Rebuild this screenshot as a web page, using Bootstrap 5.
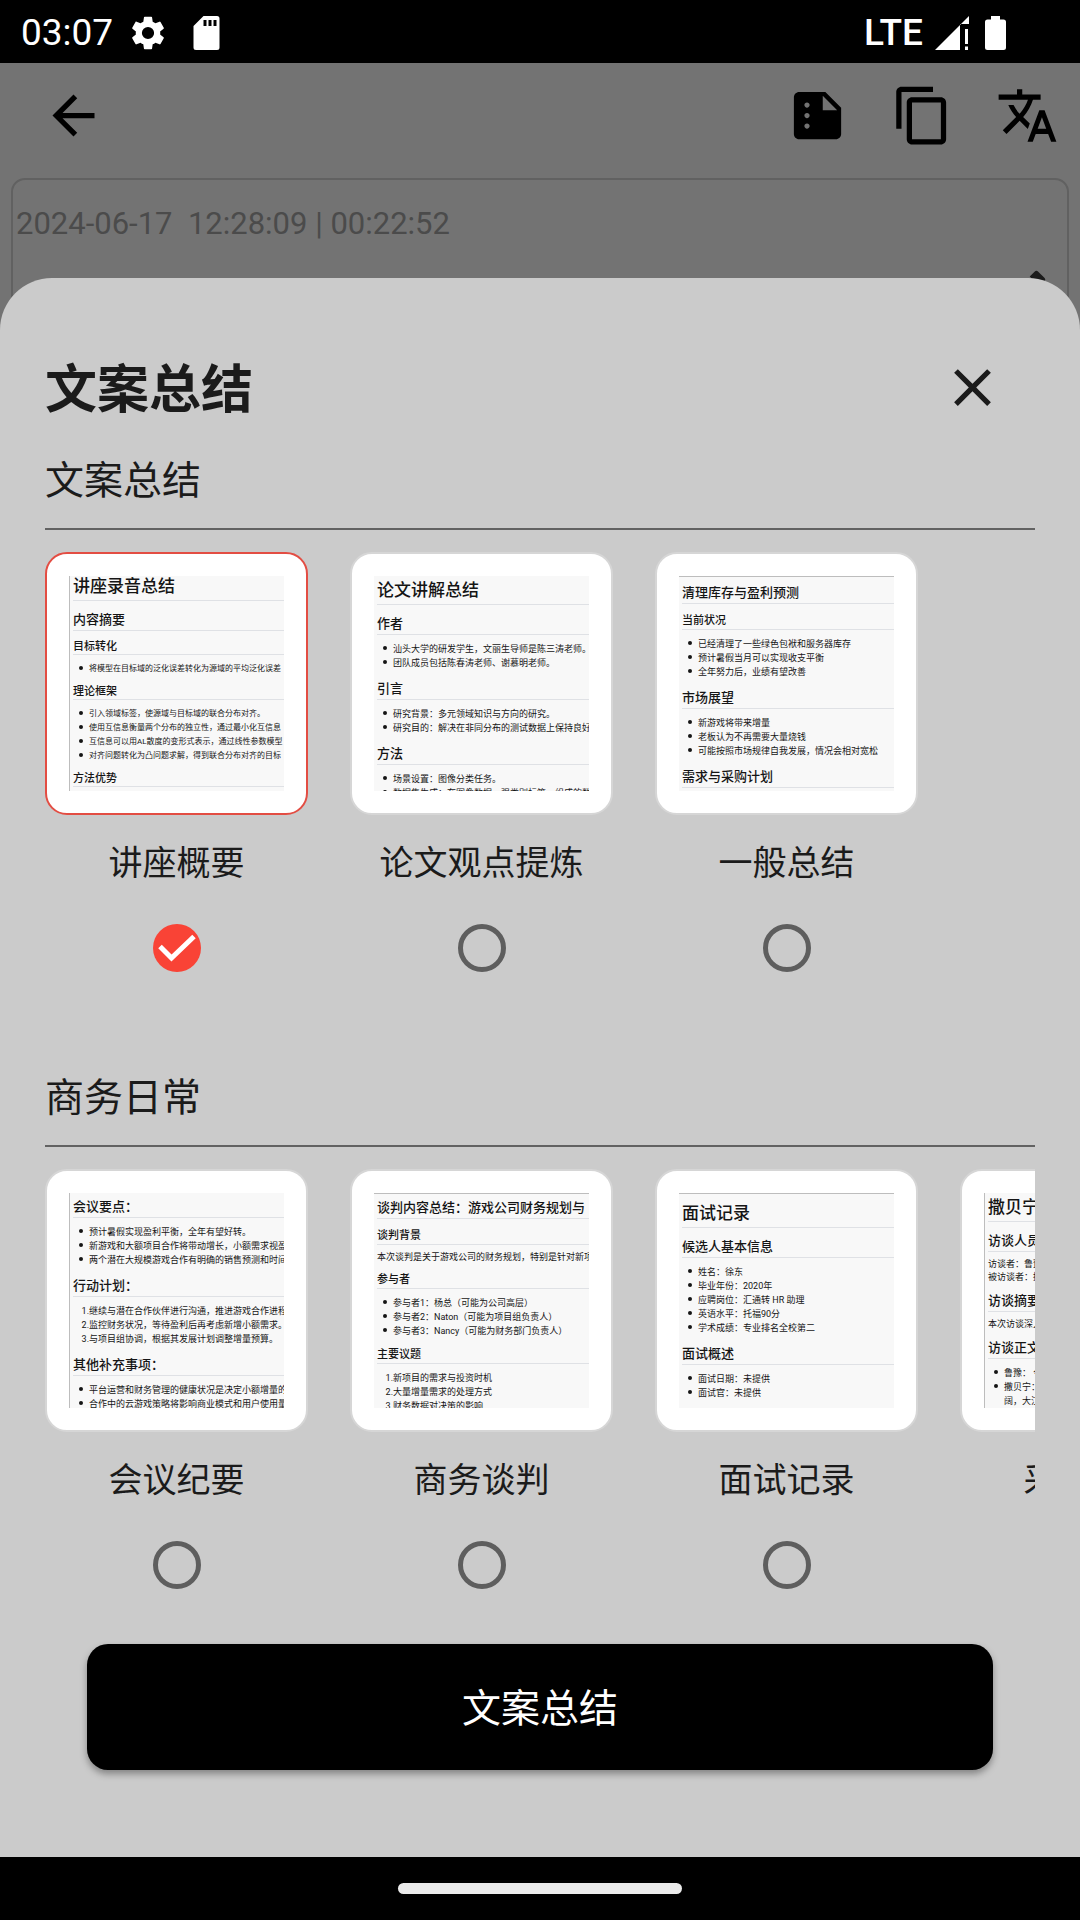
<!DOCTYPE html>
<html lang="zh-CN">
<head>
<meta charset="utf-8">
<meta name="viewport" content="width=device-width, initial-scale=1">
<title>文案总结</title>
<link href="https://cdn.jsdelivr.net/npm/bootstrap@5.3.0/dist/css/bootstrap.min.css" rel="stylesheet">
<style>
  body { font-family: Roboto, "Noto Sans CJK SC", sans-serif; background: #000; color: #1b1b1b; }
  .ico { width: 63px; height: 63px; fill: currentColor; display: block; }

  /* system bars */
  .status-bar { height: 63px; padding: 2px 74px 0 21px; font-size: 37px; color: #fff; }
  .status-bar svg { fill: #fff; height: 34px; display: block; }
  .status-left, .status-icons { gap: 18px; }
  .status-icons { gap: 28px; }
  .status-right { gap: 12px; }
  .network-type { font-size: 37px; font-weight: 500; }
  .home-bar { height: 63px; }
  .home-pill { width: 284px; height: 11px; border-radius: 6px; background: #ebebeb; }

  /* dimmed page behind the sheet */
  .dimmed { background: #737373; color: #000; }
  .tool-row { padding: 21px 21px 31px 42px; }
  .tool-gap { gap: 42px; }
  .tool-btn { color: #000; background: none; border: 0; padding: 0; }
  .record-card { margin: 0 11px; border: 2px solid #616161; border-radius: 14px; }
  .record-meta { padding: 22px 0 0 3px; font-size: 31px; line-height: 44px; color: #4b4b4b; white-space: pre; }
  .record-title { padding: 17px 14px 0 46px; font-size: 39px; line-height: 72px; color: #1b1b1b; }

  /* sheet */
  .sheet { margin-top: 215px; padding: 78px 45px 0; background: #cbcbcb; border-radius: 52px 52px 0 0; }
  .sheet-title { font-size: 52px; line-height: 69px; font-weight: 700; }
  .close-btn { margin-right: 31px; color: #1b1b1b; }
  .group-title { margin: 0; padding: 26px 0 17px; font-size: 39px; line-height: 60px; font-weight: 400; border-bottom: 2px solid #626262; }
  .group-next { margin-top: 70px; }
  .choices { gap: 42px; padding-top: 22px; overflow: hidden; }
  .choice { flex: 0 0 263px; cursor: pointer; }
  .choice-name { margin: 23px 0 36px; font-size: 34px; line-height: 50px; white-space: nowrap; }
  .choice .form-check-input { width: 48px; height: 48px; margin: 0; border: 5px solid #5e5e5e; background-color: transparent; }
  .choice .form-check-input:checked { border: 0; background-color: #f94336; background-size: 100% 100%;
    background-image: url("data:image/svg+xml,%3csvg xmlns='http://www.w3.org/2000/svg' viewBox='0 0 48 48'%3e%3cpath fill='none' stroke='%23fff' stroke-width='5' d='M7 22.500L18.500 34L41 12.500'/%3e%3c/svg%3e"); }
  .thumb { width: 263px; height: 263px; padding: 22px; border: 2px solid #d6d6d6; border-radius: 22px; background: #fff; }
  .thumb.chosen { border-color: #e34d43; }

  /* document previews */
  .doc { height: 215px; overflow: hidden; padding-left: 3px; background: #f8f8f8; font-size: 9px; line-height: 14px; white-space: nowrap; color: #151515; }
  .doc.edge-left { border-left: 1px solid #bdbdbd; }
  .doc.edge-top { border-top: 1px solid #bdbdbd; }
  .doc h3, .doc h4, .doc h5 { margin: 12px 0 0; border-bottom: 1px solid #dfe1e5; font-weight: 500; }
  .doc h3 { font-size: 17px; line-height: 20px; padding-bottom: 4px; }
  .doc h4 { font-size: 13px; line-height: 13px; padding-bottom: 4px; }
  .doc h5 { font-size: 11px; line-height: 11px; padding-bottom: 3px; margin-top: 11px; }
  .doc > :first-child { margin-top: 0; }
  .doc p { margin: 6px 0 0; line-height: 13px; }
  .doc p + h4, .doc p + h5 { margin-top: 10px; }
  .doc ul, .doc ol { margin: 7px 0 0; padding: 0; list-style: none; counter-reset: step; }
  .doc li { display: flex; }
  .doc ul > li::before { content: ""; flex: none; width: 4px; height: 4px; margin: 4px 6px 0; border-radius: 50%; background: #151515; }
  .doc ol > li::before { counter-increment: step; content: counter(step) "."; flex: none; width: 16px; text-align: right; }
  .doc-compact { font-size: 8px; }
  .doc-compact h5 { padding-bottom: 2px; margin-top: 10px; }
  .top-4 { padding-top: 4px; }
  .top-7 { padding-top: 7px; }
  .top-9 { padding-top: 9px; }

  .submit-btn { display: block; width: calc(100% - 84px); height: 126px; margin: 55px 42px 87px; padding: 10px 12px 6px; border-radius: 21px; background: #000; color: #fff; font-size: 39px; box-shadow: 0 4px 7px rgba(0, 0, 0, .35); }
  .submit-btn:hover { background: #000; color: #fff; }
</style>
<script src="https://cdn.jsdelivr.net/npm/bootstrap@5.3.0/dist/js/bootstrap.bundle.min.js"></script>
</head>
<body class="min-vh-100 d-flex flex-column">

<header class="status-bar d-flex align-items-center justify-content-between">
  <div class="status-left d-flex align-items-center">
    <span>03:07</span>
    <div class="status-icons d-flex">
      <svg width="34" viewBox="2 2 20 20"><path d="M19.140 12.940c.040-.300.060-.610.060-.940 0-.320-.020-.640-.070-.940l2.030-1.580a.490.490 0 0 0 .120-.610l-1.920-3.320a.488.488 0 0 0-.590-.220l-2.390.960c-.500-.380-1.030-.700-1.620-.940l-.360-2.540a.484.484 0 0 0-.480-.410h-3.840c-.240 0-.430.170-.470.410l-.360 2.540c-.590.240-1.130.570-1.620.940l-2.390-.960c-.220-.080-.470 0-.590.220L2.740 8.870c-.120.210-.080.470.120.610l2.030 1.580c-.050.300-.090.630-.090.940s.020.640.070.940l-2.030 1.580a.490.490 0 0 0-.120.610l1.920 3.320c.120.220.370.290.590.220l2.390-.960c.500.380 1.030.700 1.620.940l.360 2.540c.050.240.240.410.480.410h3.840c.240 0 .440-.170.470-.410l.360-2.540c.590-.240 1.130-.560 1.620-.940l2.390.960c.220.080.470 0 .590-.220l1.920-3.320c.120-.220.070-.470-.120-.610l-2.010-1.580zM12 15.600A3.600 3.600 0 1 1 12 8.400a3.600 3.600 0 0 1 0 7.200z"/></svg>
      <svg width="27" viewBox="0 0 26 34"><path fill-rule="evenodd" d="M10 0H23.500Q26 0 26 2.500V31.500Q26 34 23.500 34H2.500Q0 34 0 31.500V10ZM10 4v6h3V4ZM15 4v6h3V4ZM20 4v6h3V4Z"/></svg>
    </div>
  </div>
  <div class="status-right d-flex align-items-center">
    <span class="network-type">LTE</span>
    <svg width="34" viewBox="0 0 34 34"><path d="M0 34 34 0V8H25V34ZM30 13h3v15h-3ZM30 30.500h3V34h-3Z"/></svg>
    <svg class="ms-1" width="21" viewBox="0 0 21 34"><path d="M6 0h9v3.500h3.500Q21 3.500 21 6v25.500Q21 34 18.500 34h-16Q0 34 0 31.500V6Q0 3.500 2.500 3.500H6Z"/></svg>
  </div>
</header>

<div class="position-relative flex-grow-1 d-flex flex-column">
  <div class="dimmed position-absolute top-0 start-0 w-100 h-100 overflow-hidden" aria-hidden="true">
    <div class="tool-row d-flex justify-content-between">
      <button class="tool-btn" type="button" aria-label="返回"><svg class="ico" viewBox="0 0 24 24"><path d="M20 11H7.830l5.590-5.590L12 4l-8 8 8 8 1.410-1.410L7.830 13H20z"/></svg></button>
      <div class="tool-gap d-flex">
        <button class="tool-btn" type="button" aria-label="总结"><svg class="ico" viewBox="0 0 24 24"><path d="M15 3H5c-1.100 0-1.990.900-1.990 2L3 19c0 1.100.890 2 1.990 2H19c1.100 0 2-.900 2-2V9l-6-6zM8 17c-.550 0-1-.450-1-1s.450-1 1-1 1 .450 1 1-.450 1-1 1zm0-4c-.550 0-1-.450-1-1s.450-1 1-1 1 .450 1 1-.450 1-1 1zm0-4c-.550 0-1-.450-1-1s.450-1 1-1 1 .450 1 1-.450 1-1 1zm6 1V4.500l5.500 5.500H14z"/></svg></button>
        <button class="tool-btn" type="button" aria-label="复制"><svg class="ico" viewBox="0 0 24 24"><path d="M16 1H4c-1.100 0-2 .900-2 2v14h2V3h12V1zm3 4H8c-1.100 0-2 .900-2 2v14c0 1.100.900 2 2 2h11c1.100 0 2-.900 2-2V7c0-1.100-.900-2-2-2zm0 16H8V7h11v14z"/></svg></button>
        <button class="tool-btn" type="button" aria-label="翻译"><svg class="ico" viewBox="0 0 24 24"><path d="M12.870 15.070l-2.540-2.510.030-.030c1.740-1.940 2.980-4.170 3.710-6.530H17V4h-7V2H8v2H1v1.990h11.170C11.500 7.920 10.440 9.750 9 11.350 8.070 10.320 7.300 9.190 6.690 8h-2c.730 1.630 1.730 3.170 2.980 4.560l-5.090 5.020L4 19l5-5 3.110 3.110.760-2.040zM18.500 10h-2L12 22h2l1.120-3h4.750L21 22h2l-4.500-12zm-2.620 7l1.620-4.330L19.120 17h-3.240z"/></svg></button>
      </div>
    </div>
    <div class="record-card">
      <div class="record-meta">2024-06-17  12:28:09 | 00:22:52</div>
      <div class="record-title d-flex justify-content-between align-items-start">
        <span>多域适应泛化误差与联合分布对齐方法讲座</span>
        <svg class="ico" viewBox="0 0 24 24"><path d="M3 17.250V21h3.750L17.810 9.940l-3.750-3.750L3 17.250zM20.710 7.040a.996.996 0 0 0 0-1.410l-2.340-2.340a.996.996 0 0 0-1.410 0l-1.830 1.830 3.750 3.750 1.830-1.830z"/></svg>
      </div>
    </div>
  </div>

  <main class="sheet position-relative flex-grow-1">
    <div class="d-flex justify-content-between align-items-start">
      <h1 class="sheet-title m-0">文案总结</h1>
      <button class="tool-btn close-btn" type="button" aria-label="关闭"><svg class="ico" viewBox="0 0 24 24"><path d="M19 6.410L17.590 5 12 10.590 6.410 5 5 6.410 10.590 12 5 17.590 6.410 19 12 13.410 17.590 19 19 17.590 13.410 12z"/></svg></button>
    </div>

    <section>
      <h2 class="group-title">文案总结</h2>
      <div class="choices d-flex">
        <label class="choice d-flex flex-column align-items-center" for="tpl-lecture">
          <div class="thumb chosen">
            <div class="doc doc-compact edge-left">
              <h3>讲座录音总结</h3>
              <h4>内容摘要</h4>
              <h5>目标转化</h5>
              <ul><li>将模型在目标域的泛化误差转化为源域的平均泛化误差</li></ul>
              <h5>理论框架</h5>
              <ul><li>引入领域标签，使源域与目标域的联合分布对齐。</li><li>使用互信息衡量两个分布的独立性，通过最小化互信息</li><li>互信息可以用AL散度的变形式表示，通过线性参数模型</li><li>对齐问题转化为凸问题求解，得到联合分布对齐的目标</li></ul>
              <h5>方法优势</h5>
            </div>
          </div>
          <div class="choice-name">讲座概要</div>
          <input class="form-check-input" type="radio" name="template" id="tpl-lecture" checked>
        </label>
        <label class="choice d-flex flex-column align-items-center" for="tpl-paper">
          <div class="thumb">
            <div class="doc top-4">
              <h3>论文讲解总结</h3>
              <h4>作者</h4>
              <ul><li>汕头大学的研发学生，文丽生导师是陈三涛老师。</li><li>团队成员包括陈春涛老师、谢慕明老师。</li></ul>
              <h4>引言</h4>
              <ul><li>研究背景：多元领域知识与方向的研究。</li><li>研究目的：解决在非同分布的测试数据上保持良好的</li></ul>
              <h4>方法</h4>
              <ul><li>场景设置：图像分类任务。</li><li>数据集生成：在图像数据、强类别标签、组成的数据</li></ul>
            </div>
          </div>
          <div class="choice-name">论文观点提炼</div>
          <input class="form-check-input" type="radio" name="template" id="tpl-paper">
        </label>
        <label class="choice d-flex flex-column align-items-center" for="tpl-general">
          <div class="thumb">
            <div class="doc edge-top top-9">
              <h4>清理库存与盈利预测</h4>
              <h5>当前状况</h5>
              <ul><li>已经清理了一些绿色包袱和服务器库存</li><li>预计暑假当月可以实现收支平衡</li><li>全年努力后，业绩有望改善</li></ul>
              <h4>市场展望</h4>
              <ul><li>新游戏将带来增量</li><li>老板认为不再需要大量烧钱</li><li>可能按照市场规律自我发展，情况会相对宽松</li></ul>
              <h4>需求与采购计划</h4>
            </div>
          </div>
          <div class="choice-name">一般总结</div>
          <input class="form-check-input" type="radio" name="template" id="tpl-general">
        </label>
      </div>
    </section>

    <section class="group-next">
      <h2 class="group-title">商务日常</h2>
      <div class="choices d-flex">
        <label class="choice d-flex flex-column align-items-center" for="tpl-meeting">
          <div class="thumb">
            <div class="doc edge-left top-7">
              <h4>会议要点：</h4>
              <ul><li>预计暑假实现盈利平衡，全年有望好转。</li><li>新游戏和大额项目合作将带动增长，小额需求视盈利</li><li>两个潜在大规模游戏合作有明确的销售预测和时间表</li></ul>
              <h4>行动计划：</h4>
              <ol><li>继续与潜在合作伙伴进行沟通，推进游戏合作进程。</li><li>监控财务状况，等待盈利后再考虑新增小额需求。</li><li>与项目组协调，根据其发展计划调整增量预算。</li></ol>
              <h4>其他补充事项：</h4>
              <ul><li>平台运营和财务管理的健康状况是决定小额增量的关</li><li>合作中的云游戏策略将影响商业模式和用户使用量</li></ul>
            </div>
          </div>
          <div class="choice-name">会议纪要</div>
          <input class="form-check-input" type="radio" name="template" id="tpl-meeting">
        </label>
        <label class="choice d-flex flex-column align-items-center" for="tpl-negotiation">
          <div class="thumb">
            <div class="doc edge-top top-7">
              <h4>谈判内容总结：游戏公司财务规划与</h4>
              <h5>谈判背景</h5>
              <p>本次谈判是关于游戏公司的财务规划，特别是针对新项目</p>
              <h5>参与者</h5>
              <ul><li>参与者1：杨总（可能为公司高层）</li><li>参与者2：Naton（可能为项目组负责人）</li><li>参与者3：Nancy（可能为财务部门负责人）</li></ul>
              <h5>主要议题</h5>
              <ol><li>新项目的需求与投资时机</li><li>大量增量需求的处理方式</li><li>财务数据对决策的影响</li></ol>
            </div>
          </div>
          <div class="choice-name">商务谈判</div>
          <input class="form-check-input" type="radio" name="template" id="tpl-negotiation">
        </label>
        <label class="choice d-flex flex-column align-items-center" for="tpl-interview">
          <div class="thumb">
            <div class="doc edge-top top-9">
              <h3>面试记录</h3>
              <h4>候选人基本信息</h4>
              <ul><li>姓名：徐东</li><li>毕业年份：2020年</li><li>应聘岗位：汇通转 HR 助理</li><li>英语水平：托福90分</li><li>学术成绩：专业排名全校第二</li></ul>
              <h4>面试概述</h4>
              <ul><li>面试日期：未提供</li><li>面试官：未提供</li></ul>
            </div>
          </div>
          <div class="choice-name">面试记录</div>
          <input class="form-check-input" type="radio" name="template" id="tpl-interview">
        </label>
        <label class="choice d-flex flex-column align-items-center" for="tpl-visit">
          <div class="thumb">
            <div class="doc edge-left top-4">
              <h3>撒贝宁访谈</h3>
              <h4>访谈人员</h4>
              <p>访谈者：鲁豫<br>被访谈者：撒贝宁</p>
              <h4>访谈摘要</h4>
              <p>本次访谈深入</p>
              <h4>访谈正文</h4>
              <ul><li>鲁豫： 今天</li><li>撒贝宁：世界辽<br>阔，大江南北</li></ul>
            </div>
          </div>
          <div class="choice-name">采访记录</div>
          <input class="form-check-input" type="radio" name="template" id="tpl-visit">
        </label>
      </div>
    </section>

    <button class="btn submit-btn" type="button">文案总结</button>
  </main>
</div>

<footer class="home-bar d-flex align-items-center justify-content-center"><div class="home-pill"></div></footer>
</body>
</html>
